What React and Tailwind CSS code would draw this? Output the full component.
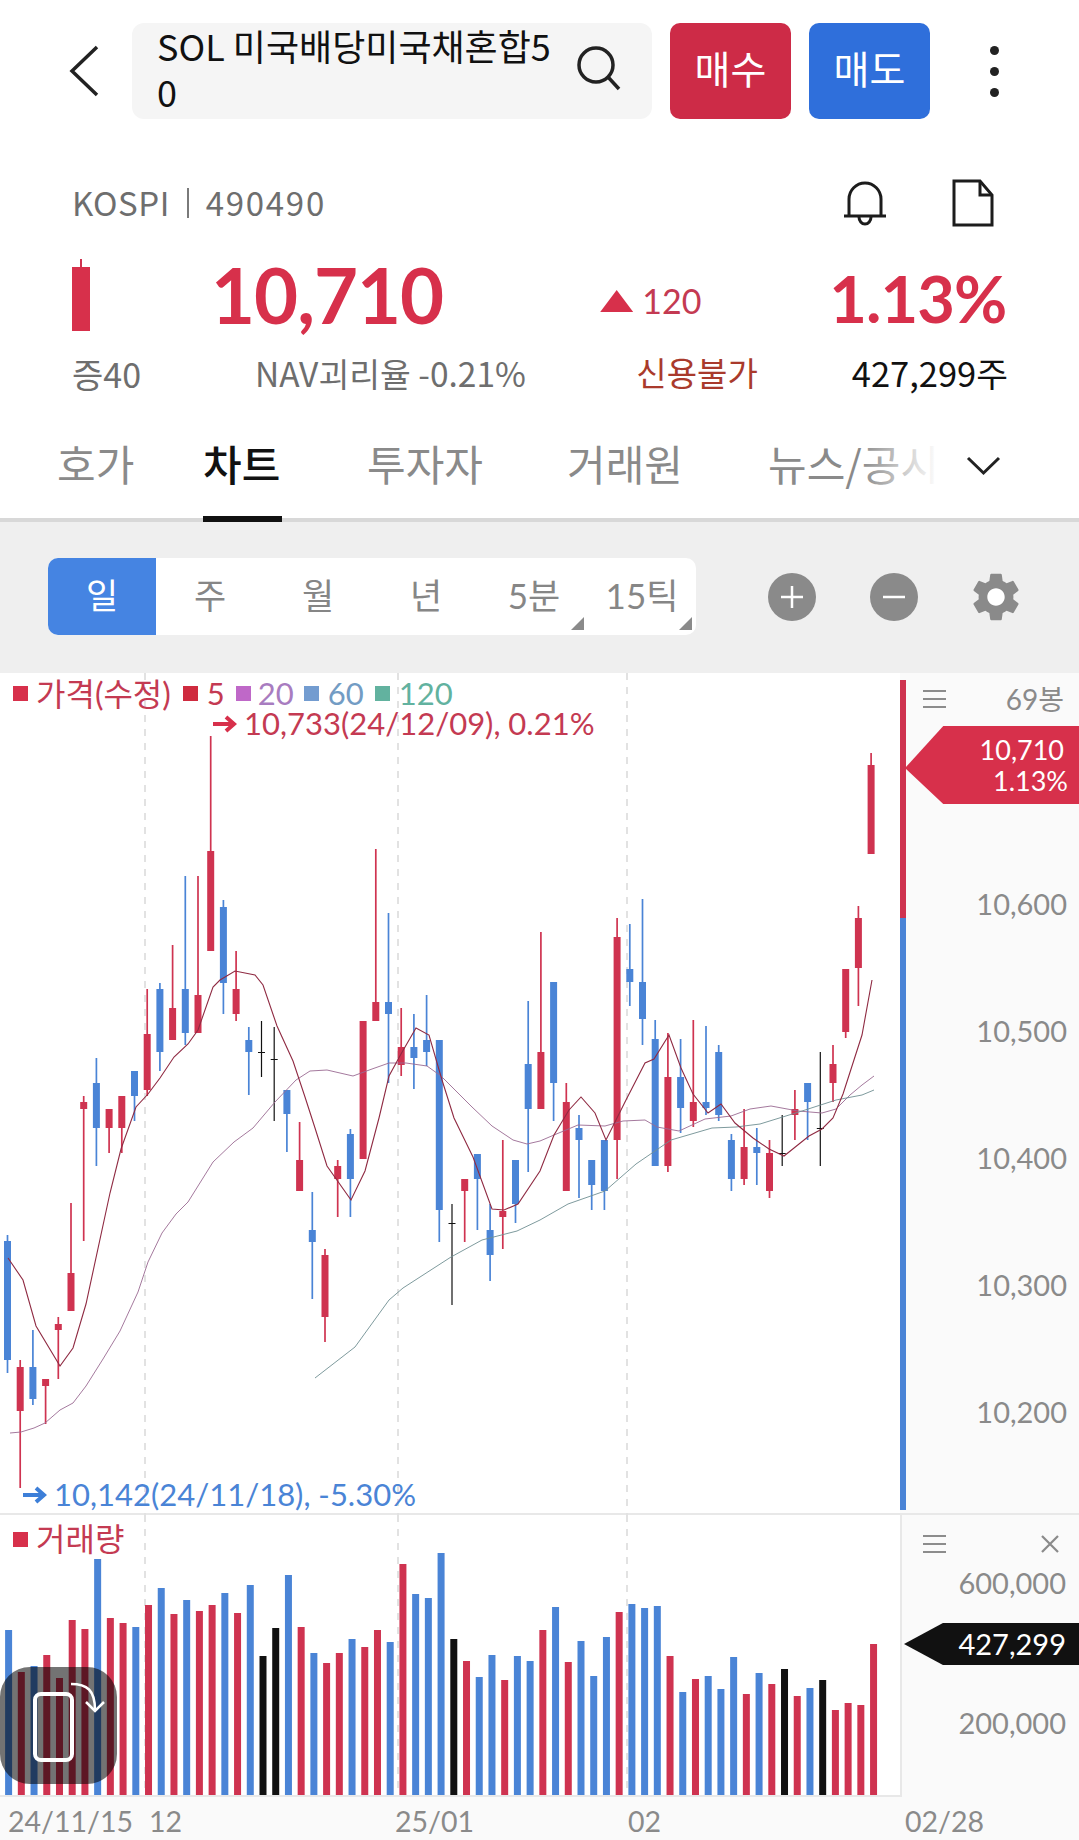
const RED = '#cf3350';
const BLUE = '#4a84d6';
const BLACK = '#111111';
const COLORS = { r: RED, b: BLUE, k: BLACK };

// wick top, body top, body bottom, wick bottom, colour
const CANDLES = [
  [1235, 1241, 1360, 1373, 'b'], [1360, 1367, 1411, 1488, 'r'], [1330, 1367, 1399, 1405, 'b'],
  [1379, 1379, 1386, 1424, 'r'], [1317, 1324, 1330, 1379, 'r'], [1203, 1273, 1311, 1311, 'r'],
  [1096, 1102, 1109, 1241, 'r'], [1058, 1083, 1128, 1166, 'b'], [1109, 1109, 1128, 1153, 'r'],
  [1096, 1096, 1128, 1153, 'r'], [1071, 1071, 1096, 1121, 'b'], [989, 1034, 1090, 1096, 'r'],
  [983, 989, 1052, 1071, 'b'], [945, 1008, 1040, 1040, 'r'], [876, 989, 1033, 1045, 'b'],
  [876, 995, 1033, 1033, 'r'], [736, 851, 951, 951, 'r'], [900, 907, 983, 1014, 'b'],
  [951, 989, 1014, 1021, 'r'], [1027, 1040, 1052, 1095, 'b'], [1021, 1052, 1053, 1077, 'k'],
  [1027, 1059, 1060, 1121, 'k'], [1090, 1090, 1114, 1152, 'b'], [1122, 1160, 1191, 1191, 'r'],
  [1192, 1230, 1242, 1299, 'b'], [1249, 1255, 1317, 1342, 'r'], [1160, 1166, 1179, 1217, 'r'],
  [1129, 1134, 1179, 1217, 'b'], [1021, 1021, 1159, 1159, 'r'], [849, 1002, 1021, 1021, 'r'],
  [913, 1002, 1014, 1083, 'b'], [1008, 1047, 1065, 1076, 'r'], [1014, 1047, 1058, 1089, 'b'],
  [995, 1040, 1052, 1066, 'b'], [1040, 1040, 1210, 1242, 'b'], [1204, 1223, 1224, 1305, 'k'],
  [1179, 1179, 1191, 1242, 'r'], [1154, 1154, 1179, 1230, 'b'], [1204, 1230, 1255, 1281, 'b'],
  [1140, 1211, 1217, 1249, 'r'], [1160, 1160, 1204, 1223, 'b'], [1001, 1064, 1109, 1172, 'b'],
  [932, 1052, 1109, 1109, 'r'], [982, 982, 1083, 1121, 'b'], [1083, 1102, 1191, 1191, 'r'],
  [1115, 1128, 1140, 1198, 'b'], [1160, 1160, 1185, 1210, 'b'], [1140, 1140, 1191, 1210, 'b'],
  [918, 937, 1140, 1179, 'r'], [924, 969, 982, 1006, 'b'], [899, 982, 1019, 1045, 'b'],
  [1020, 1039, 1166, 1166, 'b'], [1033, 1077, 1166, 1172, 'r'], [1039, 1077, 1108, 1133, 'b'],
  [1020, 1102, 1121, 1127, 'r'], [1026, 1102, 1108, 1115, 'b'], [1045, 1052, 1115, 1121, 'b'],
  [1134, 1140, 1179, 1191, 'b'], [1109, 1147, 1179, 1185, 'r'], [1128, 1147, 1153, 1185, 'b'],
  [1140, 1153, 1191, 1198, 'r'], [1115, 1153, 1154, 1166, 'k'], [1090, 1109, 1115, 1140, 'r'],
  [1083, 1083, 1102, 1140, 'b'], [1052, 1128, 1129, 1166, 'k'], [1045, 1064, 1083, 1102, 'r'],
  [969, 969, 1032, 1038, 'r'], [906, 918, 968, 1006, 'r'], [753, 765, 854, 854, 'r'],
];

// bar tops of the volume pane
const VOLUME = [
  1630, 1672, 1666, 1655, 1678, 1620, 1629, 1559, 1618, 1623, 1627, 1605, 1588, 1614, 1600, 1611, 1605,
  1593, 1613, 1585, 1656, 1628, 1575, 1627, 1653, 1663, 1653, 1639, 1647, 1630, 1642, 1564, 1594, 1598,
  1553, 1639, 1661, 1677, 1655, 1680, 1656, 1661, 1630, 1607, 1662, 1641, 1676, 1637, 1612, 1604, 1608,
  1606, 1656, 1692, 1679, 1676, 1689, 1657, 1694, 1673, 1684, 1669, 1696, 1688, 1680, 1710, 1703, 1705, 1644,
];

const MA5 = '8,1258 23,1280 36,1326 60,1366 73,1348 86,1304 110,1193 121,1149 136,1107 148,1094 160,1078 174,1057 188,1044 198,1030 213,987 220,980 235,971 255,975 263,985 277,1026 293,1061 305,1097 315,1128 327,1166 351,1200 365,1171 379,1118 389,1076 401,1054 416,1028 429,1035 442,1080 454,1118 473,1157 492,1209 504,1210 518,1204 540,1171 554,1135 569,1110 581,1097 595,1113 606,1140 626,1100 645,1063 654,1059 669,1035 681,1068 693,1094 708,1113 721,1104 735,1123 753,1138 769,1149 784,1156 809,1136 822,1129 833,1118 843,1094 862,1035 872,980';
const MA20 = '10,1433 21,1432 34,1428 45,1423 60,1410 73,1403 86,1386 103,1359 120,1331 138,1292 148,1262 162,1233 176,1214 188,1202 213,1162 234,1142 253,1128 275,1102 296,1080 310,1071 327,1070 353,1076 372,1069 389,1063 406,1063 427,1066 441,1076 455,1090 472,1107 492,1126 513,1140 527,1144 540,1141 554,1135 578,1125 605,1126 623,1121 645,1120 657,1127 679,1131 705,1119 731,1116 750,1109 771,1106 798,1111 822,1113 836,1109 850,1095 862,1085 874,1076';
const MA60 = '315,1378 355,1347 389,1300 403,1288 451,1257 482,1240 517,1231 540,1220 568,1204 605,1191 636,1164 671,1140 712,1128 736,1127 760,1124 802,1111 836,1100 862,1095 874,1090';

function PricePlot() {
  return (
    <svg className="block" width="900" height="842" viewBox="0 673 900 842">
      {[145, 398, 627].map((x) => (
        <line key={x} x1={x} x2={x} y1="673" y2="1515" stroke="#e2e2e2" strokeWidth="2" strokeDasharray="7 7" />
      ))}
      {CANDLES.map(([wt, bt, bb, wb, c], i) => {
        const x = 7.5 + i * 12.7;
        const color = COLORS[c];
        return (
          <g key={i}>
            <line x1={x} x2={x} y1={wt} y2={wb} stroke={color} strokeWidth={c === 'k' ? 1.2 : 1.7} />
            <rect x={x - 3.5} y={bt} width="7" height={bb - bt} fill={color} />
          </g>
        );
      })}
      <polyline points={MA20} fill="none" stroke="#9a6a92" strokeWidth="0.9" />
      <polyline points={MA60} fill="none" stroke="#6f8f92" strokeWidth="0.9" />
      <polyline points={MA5} fill="none" stroke="#8f2a42" strokeWidth="1.1" />
    </svg>
  );
}

function VolumePlot() {
  return (
    <svg className="block" width="900" height="282" viewBox="0 1515 900 282">
      {[145, 398, 627].map((x) => (
        <line key={x} x1={x} x2={x} y1="1515" y2="1810" stroke="#e2e2e2" strokeWidth="2" strokeDasharray="7 7" />
      ))}
      {VOLUME.map((top, i) => (
        <rect key={i} x={8.6 + i * 12.72 - 3.5} y={top} width="7" height={1795 - top} fill={COLORS[CANDLES[i][4]]} />
      ))}
      <line x1="0" x2="900" y1="1796" y2="1796" stroke="#e8e8e8" strokeWidth="2" />
    </svg>
  );
}

function LegendSquare({ className }) {
  return <span className={`inline-block w-[15px] h-[15px] shrink-0 ${className}`} />;
}

function HamburgerIcon() {
  return (
    <div className="w-[23px] flex flex-col gap-[6px]">
      <div className="h-[2px] bg-[#8c8c8c]" />
      <div className="h-[2px] bg-[#8c8c8c]" />
      <div className="h-[2px] bg-[#8c8c8c]" />
    </div>
  );
}

function ArrowGlyph({ color }) {
  return (
    <svg width="25" height="18" viewBox="0 0 25 18" fill="none" stroke={color} strokeWidth="4">
      <path d="M1 9h20M14 2l8 7-8 7" />
    </svg>
  );
}

function PeriodTab({ label, corner }) {
  return (
    <div className="relative w-[108px] flex items-center justify-center pb-[3px] text-[35px] text-[#868686]">
      {label}
      {corner && (
        <span className="absolute right-[4px] bottom-[5px] w-[13px] h-[13px] bg-[#8a8a8a] [clip-path:polygon(100%_0,100%_100%,0_100%)]" />
      )}
    </div>
  );
}

export default function App() {
  return (
    <div className="w-[1079px] h-[1840px] overflow-hidden bg-white font-['Noto_Sans_CJK_KR',sans-serif]">
      {/* 상단 검색 바 */}
      <div className="flex items-center h-[96px] mt-[23px]">
        <svg className="ml-[68px] shrink-0" width="32" height="52" viewBox="0 0 32 52" fill="none" stroke="#222" strokeWidth="3.5">
          <path d="M29 2 4 26l25 24" />
        </svg>
        <div className="ml-[32px] w-[520px] h-[96px] rounded-[12px] bg-[#f5f5f5] flex items-center pl-[25px] pr-[30px]">
          <div className="w-[404px] pb-[6px] text-[36px] leading-[46px] text-[#111] break-all">SOL 미국배당미국채혼합50</div>
          <svg className="ml-auto mb-[6px]" width="46" height="46" viewBox="0 0 46 46" fill="none" stroke="#222" strokeWidth="3.5">
            <circle cx="20" cy="20" r="17" />
            <path d="M32 32l11 12" />
          </svg>
        </div>
        <div className="ml-[18px] w-[121px] h-[96px] rounded-[10px] bg-[#cd2b47] text-white text-[39px] pb-[8px] flex items-center justify-center">매수</div>
        <div className="ml-[18px] w-[121px] h-[96px] rounded-[10px] bg-[#2f6fdb] text-white text-[39px] pb-[8px] flex items-center justify-center">매도</div>
        <div className="ml-[60px] flex flex-col gap-[12px]">
          <div className="w-[9px] h-[9px] rounded-full bg-[#222]" />
          <div className="w-[9px] h-[9px] rounded-full bg-[#222]" />
          <div className="w-[9px] h-[9px] rounded-full bg-[#222]" />
        </div>
      </div>

      {/* 종목 정보 */}
      <div className="flex items-center h-[48px] mt-[60px] pl-[72px]">
        <span className="text-[33px] text-[#6e6e6e] tracking-[0.5px]">KOSPI</span>
        <span className="ml-[17px] mr-[17px] w-[2px] h-[30px] bg-[#7a7a7a]" />
        <span className="text-[33px] text-[#6e6e6e] tracking-[1.7px]">490490</span>
        <svg className="ml-auto" width="46" height="48" viewBox="0 0 46 48" fill="none" stroke="#1c1c1c" strokeWidth="3">
          <path d="M7 36V20a16 16 0 0 1 32 0v16" />
          <path d="M2 37h42" />
          <path d="M17 38a6 7 0 0 0 12 0" />
        </svg>
        <svg className="ml-[64px] mr-[85px]" width="42" height="48" viewBox="0 0 42 48" fill="none" stroke="#1c1c1c" strokeWidth="3">
          <path d="M2 2h26l12 14v30H2z" />
          <path d="M28 2v14h12" />
        </svg>
      </div>

      <div className="flex items-center h-[76px] mt-[30px] relative font-['Lato','Noto_Sans_CJK_KR',sans-serif]">
        <div className="ml-[72px] w-[18px] h-[72px] flex flex-col items-center">
          <div className="w-[2px] h-[8px] bg-[#cf3350]" />
          <div className="w-[18px] flex-1 bg-[#d7304b]" />
        </div>
        <div className="ml-[121px] text-[76px] leading-none font-bold text-[#d7304b] tracking-[-1px]">10,710</div>
        <div className="ml-[157px] mt-[12px] w-[33px] h-[22px] bg-[#d7304b] [clip-path:polygon(50%_0,100%_100%,0_100%)]" />
        <div className="ml-[9px] mt-[12px] text-[34px] leading-none text-[#c43a52]">120</div>
        <div className="ml-[128px] mt-[6px] text-[65px] leading-none font-bold text-[#d7304b] tracking-[-1px]">1.13%</div>
      </div>

      <div className="flex items-center h-[46px] mt-[17px] text-[33px] relative">
        <span className="ml-[72px] text-[34px] text-[#6e6e6e]">증40</span>
        <span className="ml-[114px] text-[33.5px] text-[#6e6e6e]">NAV괴리율 -0.21%</span>
        <span className="ml-auto text-[#a93a2c]">신용불가</span>
        <span className="ml-[94px] mr-[71px] text-[34.5px] text-[#111]">427,299주</span>
      </div>

      {/* 탭 */}
      <div className="relative flex items-center h-[99px] mt-[27px] text-[42px] text-[#8a8a8a] border-b-[4px] border-[#d8d8d8]">
        <span className="absolute left-[57px] top-[8px]">호가</span>
        <span className="absolute left-[203px] top-[8px] font-medium text-[#111]">차트</span>
        <span className="absolute left-[203px] -bottom-[4px] w-[79px] h-[6px] bg-[#111]" />
        <span className="absolute left-[367px] top-[8px]">투자자</span>
        <span className="absolute left-[567px] top-[8px]">거래원</span>
        <span className="absolute left-[768px] top-[8px] w-[168px] overflow-hidden whitespace-nowrap">뉴스/공시</span>
        <span className="absolute left-[860px] top-[8px] w-[78px] h-[60px] bg-linear-to-r from-transparent to-white" />
        <svg className="absolute left-[966px] top-[32px]" width="35" height="22" viewBox="0 0 35 22" fill="none" stroke="#222" strokeWidth="3">
          <path d="M2 3l15.5 15L33 3" />
        </svg>
      </div>

      {/* 기간 선택 */}
      <div className="flex items-center h-[151px] pb-[2px] bg-[#efefef] font-['Lato','Noto_Sans_CJK_KR',sans-serif]">
        <div className="ml-[48px] w-[648px] h-[77px] rounded-[10px] bg-white flex overflow-hidden">
          <div className="w-[108px] pb-[3px] bg-[#4584e2] text-white text-[35px] flex items-center justify-center">일</div>
          <PeriodTab label="주" />
          <PeriodTab label="월" />
          <PeriodTab label="년" />
          <PeriodTab label="5분" corner />
          <PeriodTab label="15틱" corner />
        </div>
        <div className="ml-[72px] w-[48px] h-[48px] rounded-full bg-[#8a8a8a] flex items-center justify-center">
          <svg width="24" height="24" viewBox="0 0 24 24" stroke="#fff" strokeWidth="2.5"><path d="M12 1v22M1 12h22" /></svg>
        </div>
        <div className="ml-[54px] w-[48px] h-[48px] rounded-full bg-[#8a8a8a] flex items-center justify-center">
          <svg width="24" height="24" viewBox="0 0 24 24" stroke="#fff" strokeWidth="2.5"><path d="M1 12h22" /></svg>
        </div>
        <svg className="ml-[49px]" width="58" height="58" viewBox="0 0 24 24">
          <circle cx="12" cy="12" r="4" fill="#fff" />
          <path fill="#8a8a8a" d="M19.14 12.94c.04-.3.06-.61.06-.94 0-.32-.02-.64-.07-.94l2.03-1.58c.18-.14.23-.41.12-.61l-1.92-3.32c-.12-.22-.37-.29-.59-.22l-2.39.96c-.5-.38-1.03-.7-1.62-.94l-.36-2.54c-.04-.24-.24-.41-.48-.41h-3.84c-.24 0-.43.17-.47.41l-.36 2.54c-.59.24-1.13.57-1.62.94l-2.39-.96c-.22-.08-.47 0-.59.22L2.74 8.87c-.12.21-.08.47.12.61l2.03 1.58c-.05.3-.09.63-.09.94s.02.64.07.94l-2.03 1.58c-.18.14-.23.41-.12.61l1.92 3.32c.12.22.37.29.59.22l2.39-.96c.5.38 1.03.7 1.62.94l.36 2.54c.05.24.24.41.48.41h3.84c.24 0 .44-.17.47-.41l.36-2.54c.59-.24 1.13-.56 1.62-.94l2.39.96c.22.08.47 0 .59-.22l1.92-3.32c.12-.22.07-.47-.12-.61l-2.01-1.58zM12 15.6c-1.98 0-3.6-1.62-3.6-3.6s1.62-3.6 3.6-3.6 3.6 1.62 3.6 3.6-1.62 3.6-3.6 3.6z" />
        </svg>
      </div>

      {/* 가격 차트 */}
      <div className="relative flex h-[842px] border-b-[2px] border-[#e8e8e8] font-['Lato','Noto_Sans_CJK_KR',sans-serif]">
        <div className="relative w-[900px]">
          <PricePlot />
          <div className="absolute left-[13px] top-[5px] flex items-center h-[31px] text-[31px] leading-none whitespace-nowrap">
            <LegendSquare className="bg-[#d7304b]" />
            <span className="ml-[8px] text-[32px] text-[#c43a52]">가격(수정)</span>
            <LegendSquare className="ml-[12px] bg-[#cf2b3f]" />
            <span className="ml-[9px] text-[#c43a52]">5</span>
            <LegendSquare className="ml-[11px] bg-[#bf68c8]" />
            <span className="ml-[7px] text-[#a87cc0]">20</span>
            <LegendSquare className="ml-[10px] bg-[#739cd0]" />
            <span className="ml-[9px] text-[#739cc4]">60</span>
            <LegendSquare className="ml-[11px] bg-[#62b29f]" />
            <span className="ml-[9px] text-[#62b29f]">120</span>
          </div>
          <div className="absolute left-[212px] top-[35px] flex items-center gap-[7px] h-[31px] text-[31px] leading-none whitespace-nowrap text-[#c43a52]">
            <ArrowGlyph color="#d7304b" />
            <span>10,733(24/12/09), 0.21%</span>
          </div>
          <div className="absolute left-[22px] top-[806px] flex items-center gap-[7px] h-[31px] text-[31px] leading-none whitespace-nowrap text-[#4a84d6]">
            <ArrowGlyph color="#3d7fd8" />
            <span>10,142(24/11/18), -5.30%</span>
          </div>
        </div>
        <div className="relative w-[179px] flex bg-[#fafafa]">
          <div className="w-[6px] pt-[7px] flex flex-col shrink-0">
            <div className="h-[238px] bg-[#cf3350]" />
            <div className="h-[592px] bg-[#4a84d6]" />
          </div>
          <div className="flex-1 flex flex-col">
            <div className="flex items-center justify-between h-[58px] pt-[5px] pl-[17px] pr-[15px]">
              <HamburgerIcon />
              <span className="text-[28px] text-[#8a8a8a]">69봉</span>
            </div>
            <div className="mt-[164px] flex flex-col items-end pr-[12px] text-[29px] text-[#8a8a8a]">
              {['10,600', '10,500', '10,400', '10,300', '10,200'].map((v) => (
                <div key={v} className="h-[127px] leading-[40px]">{v}</div>
              ))}
            </div>
          </div>
          <div className="absolute left-[5px] top-[53px] w-[174px] h-[78px] bg-[#d7304b] [clip-path:polygon(0_54%,22%_0,100%_0,100%_100%,22%_100%)] flex flex-col items-end justify-center pr-[11px] text-[27px] leading-[31px] text-white">
            <span className="pr-[4px]">10,710</span>
            <span>1.13%</span>
          </div>
        </div>
      </div>

      {/* 거래량 */}
      <div className="relative flex h-[282px] font-['Lato','Noto_Sans_CJK_KR',sans-serif]">
        <div className="relative w-[900px] overflow-hidden">
          <VolumePlot />
          <div className="absolute left-[13px] top-[6px] flex items-center h-[36px] text-[32px] leading-none whitespace-nowrap">
            <LegendSquare className="bg-[#d7304b]" />
            <span className="ml-[8px] text-[#c43a52]">거래량</span>
          </div>
        </div>
        <div className="relative w-[179px] bg-[#fafafa] border-l-[2px] border-[#e8e8e8] flex flex-col">
          <div className="flex items-center justify-between h-[58px] pl-[21px] pr-[20px]">
            <HamburgerIcon />
            <svg width="18" height="18" viewBox="0 0 18 18" stroke="#8a8a8a" strokeWidth="2.2"><path d="M1 1l16 16M17 1 1 17" /></svg>
          </div>
          <div className="-mt-[8px] flex flex-col items-end pr-[13px] text-[29px] text-[#8a8a8a]">
            <div className="h-[140px] leading-[36px]">600,000</div>
            <div className="leading-[36px]">200,000</div>
          </div>
          <div className="absolute left-[2px] top-[108px] w-[177px] h-[42px] bg-[#111] [clip-path:polygon(0_50%,22%_0,100%_0,100%_100%,22%_100%)] flex items-center justify-end pr-[15px] text-[29px] text-white">
            427,299
          </div>
        </div>
        {/* 화면 회전 버튼 */}
        <div className="absolute left-0 top-[152px] w-[117px] h-[117px] rounded-[30px] bg-black/55">
          <svg width="117" height="117" viewBox="0 0 117 117" fill="none" stroke="#fff">
            <rect x="35" y="27" width="37" height="66" rx="6" strokeWidth="4" />
            <path d="M71 17c16 0 24 6 24 26" strokeWidth="2.5" />
            <path d="M86 35l9 9 9-9" strokeWidth="2.5" />
          </svg>
        </div>
      </div>

      {/* 날짜 축 */}
      <div className="relative flex h-[43px] bg-[#fafafa] text-[28.5px] text-[#8a8a8a] font-['Lato','Noto_Sans_CJK_KR',sans-serif]">
        <span className="ml-[8px] mt-[3px]">24/11/15</span>
        <span className="ml-[16px] mt-[3px]">12</span>
        <span className="ml-[213px] mt-[3px]">25/01</span>
        <span className="ml-[154px] mt-[3px]">02</span>
        <span className="absolute left-[905px] top-[3px]">02/28</span>
      </div>
    </div>
  );
}
